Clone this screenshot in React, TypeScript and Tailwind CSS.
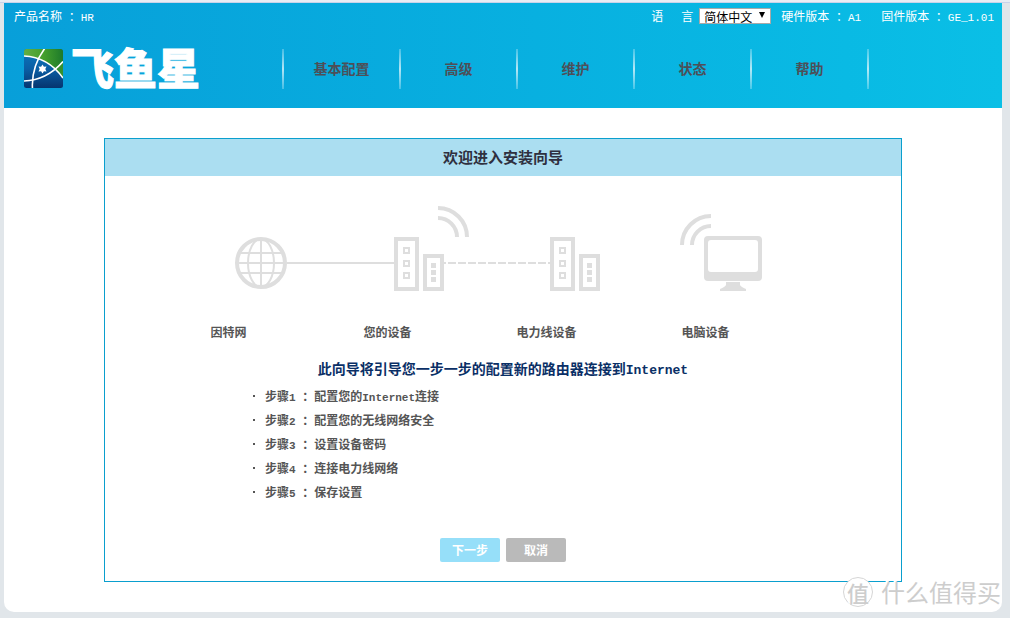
import { useState, type ReactNode } from 'react'

const NAV = ['基本配置', '高级', '维护', '状态', '帮助']

const DEVICES = ['因特网', '您的设备', '电力线设备', '电脑设备']

const STEPS: ReactNode[] = [
  <>
    配置您的<Latin>Internet</Latin>连接
  </>,
  '配置您的无线网络安全',
  '设置设备密码',
  '连接电力线网络',
  '保存设置',
]

// Latin letters and digits are about half the width of a Chinese character.
function Latin({ children }: { children: ReactNode }) {
  return (
    <span className="whitespace-pre font-['Liberation_Mono',monospace] text-[11px] leading-none">{children}</span>
  )
}

function Divider() {
  return <span className="h-10 w-0.5 bg-gradient-to-b from-white/25 via-white/70 to-white/25" />
}

function LogoMark() {
  return (
    <svg viewBox="0 0 39 39" className="h-[39px] w-[39px] shrink-0" aria-hidden="true">
      <defs>
        <linearGradient id="sky" x1="0" y1="0" x2="0" y2="1">
          <stop offset="0" stopColor="#0a78bd" />
          <stop offset="0.5" stopColor="#0a5fa5" />
          <stop offset="1" stopColor="#06356f" />
        </linearGradient>
        <linearGradient id="leaf" x1="0" y1="0" x2="1" y2="0">
          <stop offset="0" stopColor="#62ad45" />
          <stop offset="0.5" stopColor="#45a02c" />
          <stop offset="1" stopColor="#1d7a2b" />
        </linearGradient>
        <clipPath id="tile">
          <rect width="39" height="39" rx="2.5" />
        </clipPath>
      </defs>
      <g clipPath="url(#tile)">
        <rect width="39" height="39" fill="url(#sky)" />
        <path d="M0 0H39V13Q35 17 31 20.500Q19 8 0 7Z" fill="url(#leaf)" />
        <path d="M39 13V29Q36 25 31 20.500Z" fill="#34902f" />
        <g fill="none" stroke="#fff" strokeWidth="1.600">
          <path d="M0 7Q24 8 39 29" />
          <path d="M0 32Q23 31 39 12.500" />
          <path d="M21 -1Q7 18 8.500 40" />
        </g>
        <path
          d="M18.500 15.500l1.400 2.200 2.600-.1-1.200 2.400 1.200 2.400-2.600-.1-1.400 2.200-1.400-2.200-2.600.1 1.200-2.400-1.200-2.400 2.600.1z"
          fill="#fff"
        />
      </g>
    </svg>
  )
}

function PlugPair({ x }: { x: number }) {
  return (
    <g transform={`translate(${x} 37)`}>
      <rect x="2" y="2" width="21" height="50" fill="none" strokeWidth="4" />
      <rect x="31" y="19" width="17" height="33" fill="none" strokeWidth="4" />
      {[11, 24, 36].map((y) => (
        <rect key={y} x="10" y={y} width="5" height="5" fill="none" strokeWidth="2" />
      ))}
      {[26, 33, 40].map((y) => (
        <rect key={y} x="37" y={y} width="5" height="5" stroke="none" />
      ))}
    </g>
  )
}

function NetworkDiagram() {
  return (
    <svg
      viewBox="0 0 708 100"
      className="block w-full"
      fill="#dedede"
      stroke="#dedede"
      strokeWidth="2"
      role="img"
      aria-label="网络连接图"
    >
      <g fill="none">
        <circle cx="112" cy="63" r="24" strokeWidth="4" />
        <ellipse cx="112" cy="63" rx="13" ry="24" />
        <path d="M112 38V88M88 63H136M91 53H133M91 73H133" />
        <path d="M138 63H245" />
        <path d="M295 63H401" strokeDasharray="8 2" strokeDashoffset="6" />
        <g strokeWidth="4">
          <path d="M289 8A29 29 0 0 1 318 37M289 18A19 19 0 0 1 308 37" />
          <path d="M562 16A29 29 0 0 0 533 45M562 26A19 19 0 0 0 543 45" />
        </g>
      </g>
      <PlugPair x={245} />
      <PlugPair x={401} />
      <g stroke="none">
        <rect x="555" y="36" width="58" height="45" rx="4" />
        <rect x="559" y="40" width="50" height="32" rx="3" fill="#fff" />
        <path d="M577 82H591V85Q592 87 597 89V91H571V89Q576 87 577 85Z" />
      </g>
    </svg>
  )
}

function Header() {
  const [lang, setLang] = useState('zh')

  return (
    <header className="h-[105px] bg-gradient-to-r from-[#089fd9] to-[#0abfe6]">
      <div className="flex h-[26px] items-center justify-between pr-2 pl-2.5 text-xs text-white">
        <p>
          产品名称<Latin> </Latin>：<Latin>HR</Latin>
        </p>
        <div className="flex items-center">
          <label htmlFor="lang" className="mr-1.5 flex gap-[18px]">
            <span>语</span>
            <span>言</span>
          </label>
          <div className="relative mr-2.5 h-4 w-[72px]">
            <select
              id="lang"
              value={lang}
              onChange={(e) => setLang(e.target.value)}
              className="block h-4 w-full appearance-none border border-[#a9a9a9] bg-white pl-1 text-xs leading-4 text-black"
            >
              <option value="zh">简体中文</option>
              <option value="en">English</option>
            </select>
            <svg viewBox="0 0 6 6" className="pointer-events-none absolute top-1 right-1.5 h-1.5 w-1.5" aria-hidden="true">
              <path d="M0 0H6L3 6Z" />
            </svg>
          </div>
          <p className="mr-5">
            硬件版本<Latin> </Latin>：<Latin>A1</Latin>
          </p>
          <p>
            固件版本<Latin> </Latin>：<Latin>GE_1.01</Latin>
          </p>
        </div>
      </div>

      <div className="flex h-[79px] items-center pl-5">
        <a href="#home" className="flex w-[258px] items-center gap-2 text-white">
          <LogoMark />
          <span className="pb-1.5 text-[43px] leading-9 font-black [-webkit-text-stroke:1px_#fff]">飞鱼星</span>
        </a>
        <nav className="flex items-center">
          <Divider />
          {NAV.map((item) => (
            <div key={item} className="flex items-center">
              <a href={`#${item}`} className="w-[115px] pb-0.5 text-center text-sm font-bold text-[#4d4f58]">
                {item}
              </a>
              <Divider />
            </div>
          ))}
        </nav>
      </div>
    </header>
  )
}

function Watermark() {
  return (
    <div className="pointer-events-none absolute right-[9px] bottom-[11px] flex items-center gap-2 text-[#cdcdcd] [text-shadow:-1px_-1px_0_#fff,-2px_-1px_0_#fff]">
      <span className="flex h-[30px] w-[30px] items-center justify-center rounded-full border border-[#d6d6d6] bg-white text-[22px] leading-none font-medium">
        值
      </span>
      <span className="text-2xl leading-6">什么值得买</span>
    </div>
  )
}

export default function App() {
  return (
    <div className="relative flex min-h-screen flex-col bg-[#e1e6ea] pr-2 pb-1.5 pl-1 font-['Noto_Sans_CJK_SC',sans-serif]">
      <div className="-mr-2 -ml-1 h-[3px] border-b border-[#c9d3ea] bg-[#e9edf4]" />
      <Header />

      <main className="flex-1 rounded-b-[10px] bg-white py-[30px]">
        <section className="mx-auto w-4/5 border border-[#0a9fce] pb-[19px]">
          <h1 className="bg-[#abdef1] pb-0.5 text-center text-[15px] leading-[35px] font-bold text-[#2f3040]">
            欢迎进入安装向导
          </h1>

          <div className="mx-auto max-w-[708px] pt-6">
            <NetworkDiagram />
            <ul className="mt-5 mr-[72px] grid grid-cols-4 text-center text-xs leading-6 font-bold text-[#555]">
              {DEVICES.map((d) => (
                <li key={d}>{d}</li>
              ))}
            </ul>

            <h2 className="mt-3 text-center text-sm leading-6 font-bold text-[#0a2f66]">
              此向导将引导您一步一步的配置新的路由器连接到
              <span className="font-['Liberation_Mono',monospace] text-[13px] leading-none">Internet</span>
            </h2>
            <ul className="mt-1 ml-[104px] text-xs leading-6 font-bold text-[#555]">
              {STEPS.map((step, i) => (
                <li key={i} className="flex items-center">
                  <span className="mr-2.5 h-0.5 w-0.5 bg-[#555]" />
                  <span>
                    步骤<Latin>{i + 1} </Latin>：{step}
                  </span>
                </li>
              ))}
            </ul>
          </div>

          <div className="mt-[34px] flex justify-center gap-1.5 text-xs font-bold text-white">
            <button type="button" className="h-6 w-[60px] rounded-xs bg-[#96dff9]">
              下一步
            </button>
            <button type="button" className="h-6 w-[60px] rounded-xs bg-[#bababa]">
              取消
            </button>
          </div>
        </section>
      </main>

      <Watermark />
    </div>
  )
}
